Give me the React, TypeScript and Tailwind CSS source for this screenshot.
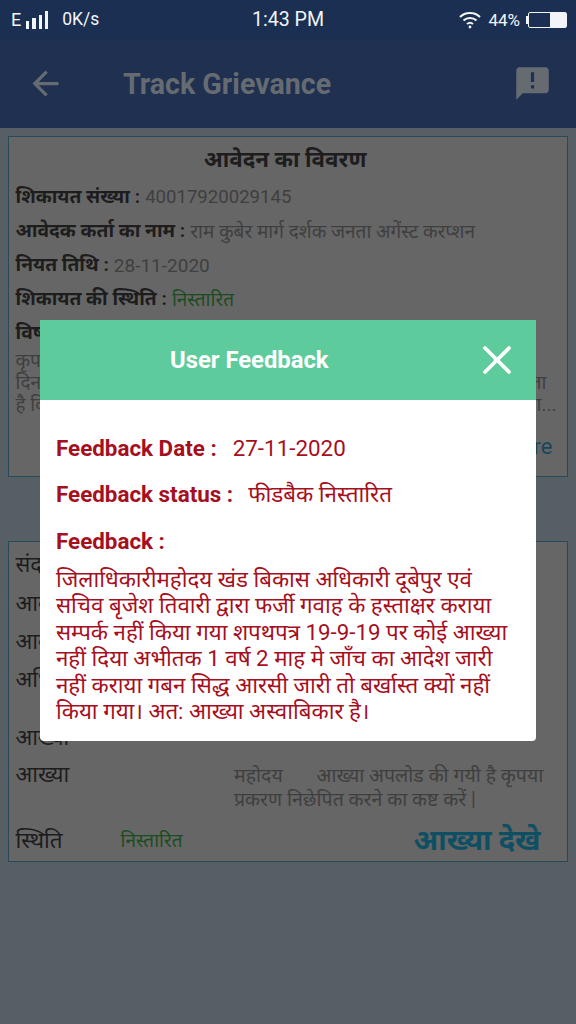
import { X } from 'lucide-react';

const font = "font-['Roboto','Noto_Sans','Noto_Sans_CJK_SC',sans-serif]";

function StatusBar() {
  return (
    <div className="h-10 bg-[#1a2f52] flex items-center justify-between pl-[11px] pr-[9px] text-[#f2f4f7] shrink-0 relative">
      <div className="flex items-center">
        <span className="text-[18px] leading-none mr-[5px]">E</span>
        <div className="flex items-end gap-[3px] h-[18px] mr-[14px]">
          <div className="w-[3px] h-[8px] bg-[#f2f4f7]" />
          <div className="w-[4px] h-[11px] bg-[#f2f4f7]" />
          <div className="w-[3px] h-[14px] bg-[#f2f4f7]" />
          <div className="w-[3px] h-[18px] bg-[#f2f4f7]" />
        </div>
        <span className="text-[17.5px] leading-none">0K/s</span>
      </div>
      <div className="absolute left-[228px] w-[120px] text-center text-[19.6px] leading-none">1:43 PM</div>
      <div className="flex items-center">
        <svg width="22" height="18" viewBox="0 0 22 18" fill="none" stroke="#f2f4f7" strokeWidth="2" className="mr-[7px]">
          <path d="M1 6 C6 0.5 16 0.5 21 6" />
          <path d="M4.5 9.5 C8 6 14 6 17.5 9.5" />
          <path d="M8 13 C9.8 11.5 12.2 11.5 14 13" />
          <circle cx="11" cy="16" r="1.4" fill="#f2f4f7" stroke="none" />
        </svg>
        <span className="text-[17px] leading-none mr-[6px]">44%</span>
        <div className="w-[2px] h-[8px] bg-[#f2f4f7]" />
        <div className="w-[39px] h-[16px] border border-[#f2f4f7] rounded-[2px] flex justify-end">
          <div className="w-[16px] bg-[#f2f4f7]" />
        </div>
      </div>
    </div>
  );
}

function Header() {
  return (
    <div className="h-[88px] bg-[#1f3050] flex items-center pl-[26px] pr-[24px] pb-[2px] shrink-0 text-[#666b72]">
      <svg width="39" height="39" viewBox="0 0 24 24" fill="#666b72">
        <path d="M20 11H7.83l5.59-5.59L12 4l-8 8 8 8 1.41-1.41L7.83 13H20v-2z" />
      </svg>
      <h1 className="ml-[58px] mt-[2px] text-[28.6px] font-bold leading-none">Track Grievance</h1>
      <svg width="39" height="39" viewBox="0 0 24 24" fill="#666b72" className="ml-auto">
        <path d="M20 2H4c-1.1 0-1.99.9-1.99 2L2 22l4-4h14c1.1 0 2-.9 2-2V4c0-1.1-.9-2-2-2zm-7 9h-2V5h2v6zm0 4h-2v-2h2v2z" />
      </svg>
    </div>
  );
}

function InfoRow({ label, children }: { label: string; children: React.ReactNode }) {
  return (
    <div className="h-[34px] flex items-center text-[19px] leading-none whitespace-nowrap">
      <span className="font-bold text-[19.2px] text-[#1d1d1d] mr-[5px]">{label} :</span>
      {children}
    </div>
  );
}

function DetailsCard() {
  return (
    <div className="h-[341px] border-[1.5px] border-[#234b59] bg-[#666666] mt-[8px] mx-[8px] px-[6.5px] pt-[8px] relative overflow-hidden">
      <h2 className="text-center text-[22.3px] font-bold leading-[28px] text-[#1d1d1d] mb-[7px] pr-[6px]">आवेदन का विवरण</h2>
      <InfoRow label="शिकायत संख्या"><span className="text-[#3f3f3f] text-[18.6px]">40017920029145</span></InfoRow>
      <InfoRow label="आवेदक कर्ता का नाम"><span className="text-[#3f3f3f]">राम कुबेर मार्ग दर्शक जनता अगेंस्ट करप्शन</span></InfoRow>
      <InfoRow label="नियत तिथि"><span className="text-[#3f3f3f]">28-11-2020</span></InfoRow>
      <InfoRow label="शिकायत की स्थिति"><span className="text-[#1c4d22]">निस्तारित</span></InfoRow>
      <InfoRow label="विषय"><span /></InfoRow>
      <div className="text-[19px] leading-[22px] text-[#3f3f3f] whitespace-nowrap pr-[14px]">
        <p>कृपया</p>
        <p className="flex justify-between">दिनांक<span>जाता</span></p>
        <p className="flex justify-between -mr-[10px]">है कि<span>जाता...</span></p>
      </div>
      <p className="text-right text-[22px] leading-none text-[#1a4557] mt-[20px] pr-[8px]">more</p>
    </div>
  );
}

function ReportCard() {
  return (
    <div className="h-[321px] border-[1.5px] border-[#234b59] bg-[#666666] mt-[64px] mx-[8px] px-[6.5px] pt-[8px] text-[22px] leading-none text-[#1d1d1d] whitespace-nowrap">
      <div className="h-[30px] flex items-center">संदर्भ</div>
      <div className="h-[38px] mt-[5px] flex items-center">आवेदन</div>
      <div className="h-[38px] flex items-center">आवेदक</div>
      <div className="h-[38px] flex items-center">अधिकारी</div>
      <div className="h-[39px] mt-[19px] flex items-center">आख्या</div>
      <div className="flex h-[62px] pt-[7px]">
        <span className="w-[218.5px] leading-[22px]">आख्या</span>
        <p className="text-[19.5px] leading-[23.5px] text-[#3f3f3f] whitespace-pre-wrap">{'महोदय       आख्या अपलोड की गयी है कृपया\nप्रकरण निछेपित करने का कष्ट करें |'}</p>
      </div>
      <div className="flex items-center h-[42px]">
        <span className="w-[105px] text-[22.5px]">स्थिति</span>
        <span className="text-[19px] text-[#1c4d22]">निस्तारित</span>
        <span className="ml-auto mr-[20px] text-[29px] font-bold text-[#0f4f63]">आख्या देखे</span>
      </div>
    </div>
  );
}

function FeedbackModal() {
  return (
    <div className="absolute left-[40px] top-[320px] w-[496px] h-[421px] bg-white rounded-b-[4px] overflow-hidden">
      <div className="h-[80px] bg-[#5ecb9c] flex items-center text-white">
        <h3 className="ml-[130px] mt-[1px] text-[23.8px] font-bold leading-none">User Feedback</h3>
        <X size={48} strokeWidth={1.9} className="ml-auto mr-[15px]" />
      </div>
      <div className="px-[16px] pt-[32px] text-[#a50f1e] text-[22.4px] leading-none">
        <div className="h-[32px] flex items-center whitespace-nowrap">
          <span className="font-bold mr-[16px]">Feedback Date :</span>
          <span>27-11-2020</span>
        </div>
        <div className="h-[32px] mt-[14.5px] flex items-center whitespace-nowrap">
          <span className="font-bold mr-[15px]">Feedback status :</span>
          <span>फीडबैक निस्तारित</span>
        </div>
        <div className="h-[32px] mt-[14.5px] flex items-center font-bold whitespace-nowrap">Feedback :</div>
        <p className="mt-[9px] text-[22.3px] leading-[26.4px] whitespace-pre-line">
          {'जिलाधिकारीमहोदय खंड बिकास अधिकारी दूबेपुर एवं\nसचिव बृजेश तिवारी द्वारा फर्जी गवाह के हस्ताक्षर कराया\nसम्पर्क नहीं किया गया शपथपत्र 19-9-19 पर कोई आख्या\nनहीं दिया अभीतक 1 वर्ष 2 माह मे जाँच का आदेश जारी\nनहीं कराया गबन सिद्ध आरसी जारी तो बर्खास्त क्यों नहीं\nकिया गया। अत: आख्या अस्वाबिकार है।'}
        </p>
      </div>
    </div>
  );
}

export default function App() {
  return (
    <div className={`${font} relative w-[576px] h-[1024px] bg-[#575f65] overflow-hidden flex flex-col`}>
      <StatusBar />
      <Header />
      <DetailsCard />
      <ReportCard />
      <FeedbackModal />
    </div>
  );
}
